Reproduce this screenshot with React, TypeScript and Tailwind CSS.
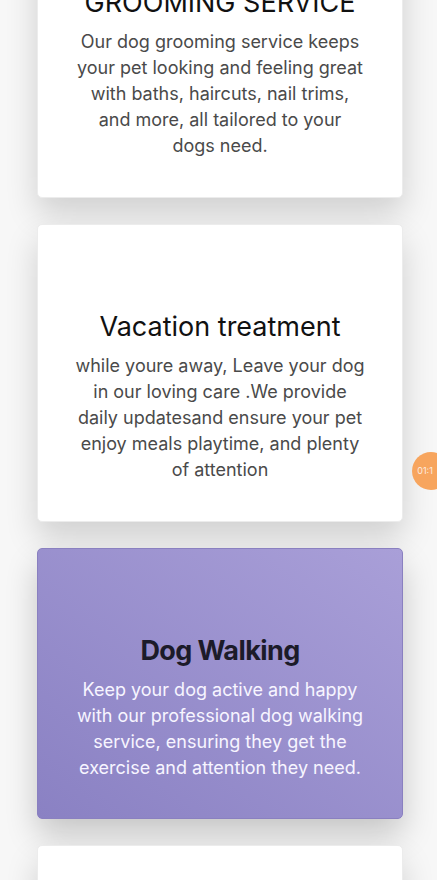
const services = [
  {
    title: "GROOMING SERVICE",
    text: "Our dog grooming service keeps your pet looking and feeling great with baths, haircuts, nail trims, and more, all tailored to your dogs need.",
    active: false,
  },
  {
    title: "Vacation treatment",
    text: "while youre away, Leave your dog in our loving care .We provide daily updatesand ensure your pet enjoy meals playtime, and plenty of attention",
    active: false,
  },
  {
    title: "Dog Walking",
    text: "Keep your dog active and happy with our professional dog walking service, ensuring they get the exercise and attention they need.",
    active: true,
  },
  {
    title: "Pet Sitting",
    text: "Loving care for your pet at home while you are away, with walks, meals and lots of cuddles.",
    active: false,
  },
];

function ServiceCard({ title, text, active }: { title: string; text: string; active: boolean }) {
  return (
    <div
      className={
        active
          ? "flex h-[271px] flex-col items-center rounded-[5px] border border-[#8a80c0] bg-gradient-to-tr from-[#8a81c3] to-[#a99fd8] px-[30px] pt-[86px] text-center shadow-[0_16px_32px_rgba(0,0,0,0.2)]"
          : "flex h-[298px] flex-col items-center rounded-[5px] border border-[#ececec] bg-white px-[30px] pt-[86px] text-center shadow-[0_16px_32px_rgba(0,0,0,0.16)]"
      }
    >
      <h3
        className={
          active
            ? "text-[27px] font-bold leading-[32px] tracking-[-0.6px] text-[#1c1b29]"
            : "text-[27px] font-normal leading-[32px] text-[#111111]"
        }
      >
        {title}
      </h3>
      <p
        className={
          active
            ? "mt-[10px] max-w-[289.5px] text-[18px] leading-[26px] text-[#f7f5ff]"
            : "mt-[10px] max-w-[289.5px] text-[18px] leading-[26px] text-[#4a4a4a]"
        }
      >
        {text}
      </p>
    </div>
  );
}

export default function App() {
  return (
    <div
      className="relative h-[880px] w-full overflow-hidden bg-[#f7f7f7]"
      style={{ fontFamily: "Inter, 'Noto Sans', sans-serif" }}
    >
      <div className="ml-[37px] mt-[-100px] flex w-[366px] flex-col gap-[26px]">
        {services.map(s => (
          <ServiceCard key={s.title} {...s} />
        ))}
      </div>
      <div className="absolute left-[412px] top-[452px] flex h-[38px] w-[38px] items-center justify-center rounded-full bg-[#f7a55e] text-[9px] text-white">
        <span className="-ml-[12px] opacity-80">01:1</span>
      </div>
    </div>
  );
}
